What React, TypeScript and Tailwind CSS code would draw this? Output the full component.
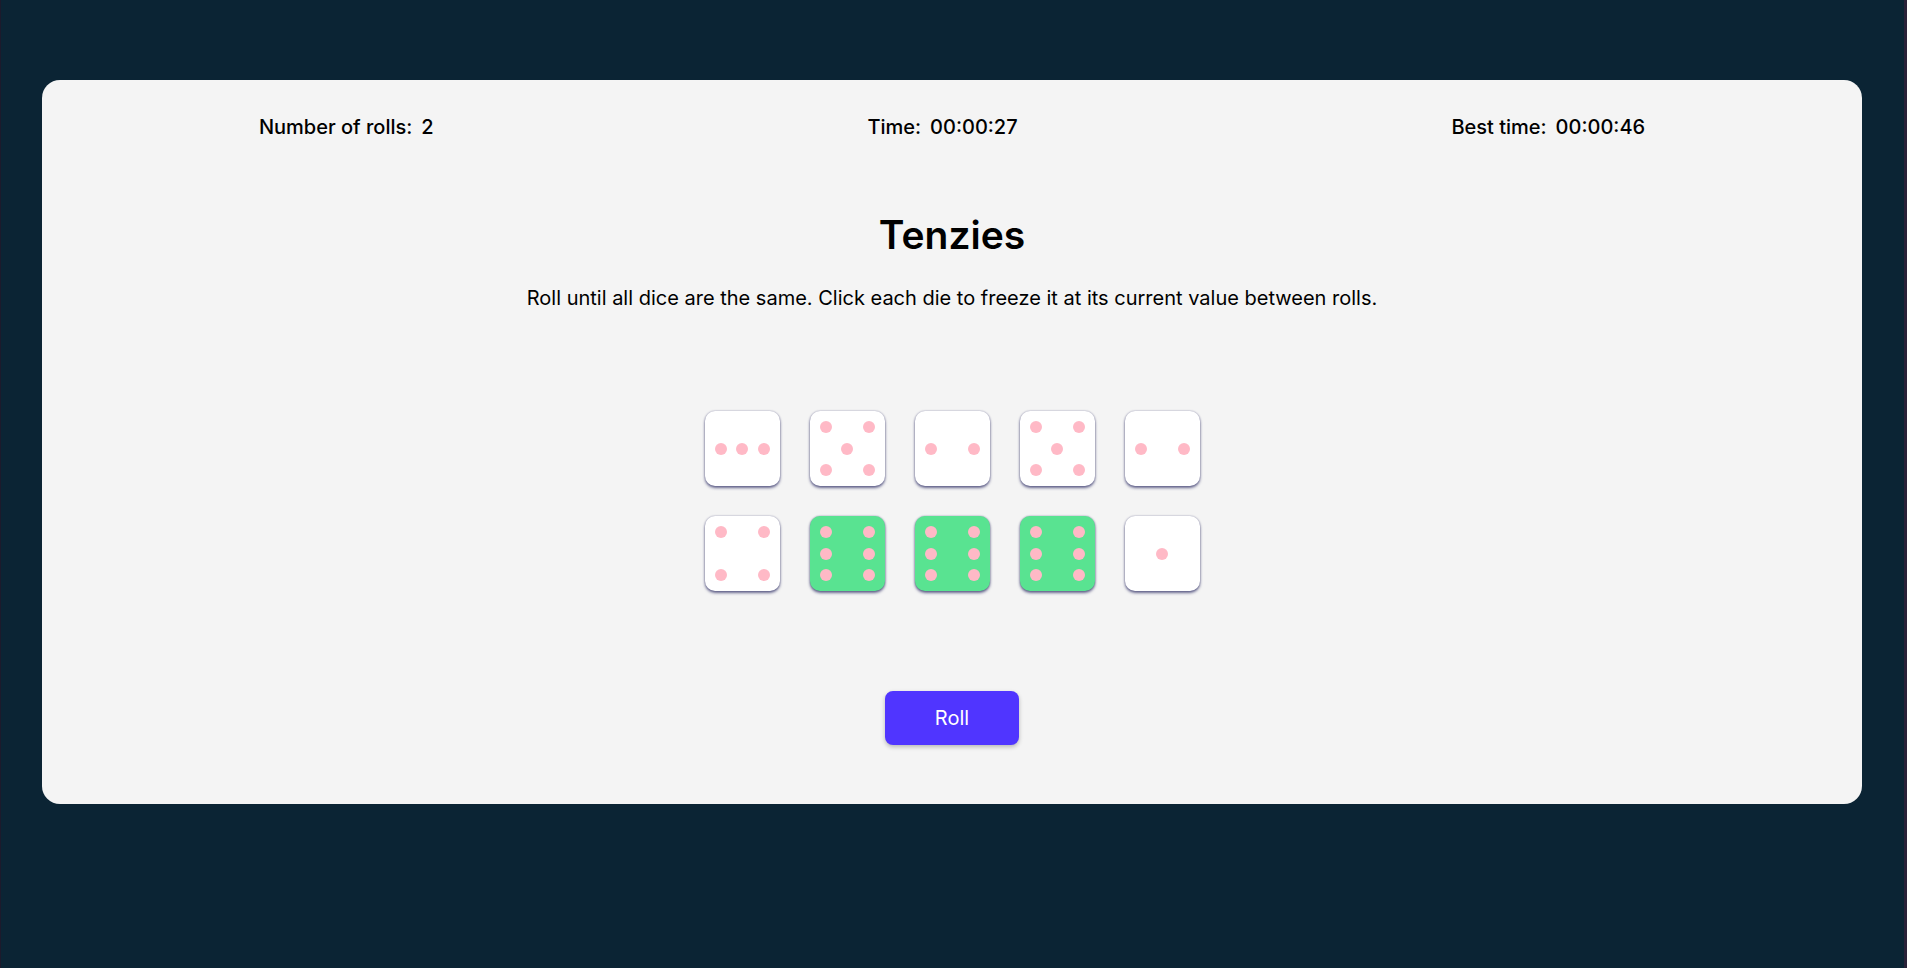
import React from "react";

const PIPS: Record<number, [number, number][]> = {
  1: [[1, 1]],
  2: [[1, 0], [1, 2]],
  3: [[1, 0], [1, 1], [1, 2]],
  4: [[0, 0], [0, 2], [2, 0], [2, 2]],
  5: [[0, 0], [0, 2], [1, 1], [2, 0], [2, 2]],
  6: [[0, 0], [0, 2], [1, 0], [1, 2], [2, 0], [2, 2]],
};

const rowClass = ["row-start-1", "row-start-2", "row-start-3"];
const colClass = ["col-start-1", "col-start-2", "col-start-3"];

function Die({ value, held }: { value: number; held?: boolean }) {
  return (
    <button
      className={`grid h-[75px] w-[75px] grid-cols-[12px_12px_12px] grid-rows-[12px_12px_12px] content-between justify-between rounded-[10px] p-[10px] shadow-[0_2px_3px_rgba(30,30,90,0.65),0_0_2px_rgba(30,30,90,0.4)] ${
        held ? "bg-[#59E391]" : "bg-white"
      }`}
    >
      {PIPS[value].map(([r, c], i) => (
        <span
          key={i}
          className={`h-[12px] w-[12px] rounded-full bg-[#FFB9C6] ${rowClass[r]} ${colClass[c]}`}
        />
      ))}
    </button>
  );
}

export default function App() {
  const row1 = [3, 5, 2, 5, 2];
  const row2: [number, boolean][] = [
    [4, false],
    [6, true],
    [6, true],
    [6, true],
    [1, false],
  ];
  return (
    <div
      className="flex h-[968px] w-full flex-col border-l border-r-[3px] border-l-[#1c1a2c] border-r-[#2a2238] bg-[#0B2434] pl-[41px] pr-[42px] pt-[80px]"
      style={{ fontFamily: "Inter, 'Noto Sans', sans-serif" }}
    >
      <main className="flex h-[724px] w-full flex-col items-center rounded-[18px] bg-[#F4F4F4] text-black">
        <div className="flex w-full justify-around pt-[33px] text-[20px] font-medium leading-[28px] text-black">
          <div>
            Number of rolls:<span className="ml-[9px]">2</span>
          </div>
          <div>
            Time:<span className="ml-[9px]">00:00:27</span>
          </div>
          <div>
            Best time:<span className="ml-[9px]">00:00:46</span>
          </div>
        </div>
        <h1 className="mt-[70px] text-[39px] font-semibold leading-[48px]">Tenzies</h1>
        <p className="mt-[25px] text-[20px] leading-[28px]">
          Roll until all dice are the same. Click each die to freeze it at its current value between rolls.
        </p>
        <div className="mt-[99px] flex flex-col gap-[30px]">
          <div className="flex gap-[30px]">
            {row1.map((v, i) => (
              <Die key={i} value={v} />
            ))}
          </div>
          <div className="flex gap-[30px]">
            {row2.map(([v, h], i) => (
              <Die key={i} value={v} held={h} />
            ))}
          </div>
        </div>
        <button className="mt-[100px] h-[54px] w-[134px] rounded-[8px] bg-[#5035FF] text-[20px] text-white shadow-[0_2px_4px_rgba(0,0,0,0.25)]">
          Roll
        </button>
      </main>
    </div>
  );
}
